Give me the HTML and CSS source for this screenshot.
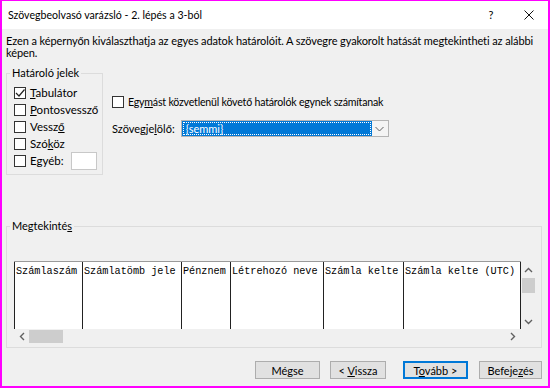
FILE: index.html
```html
<!DOCTYPE html>
<html lang="hu">
<head>
    <meta charset="UTF-8">
    <title>Szövegbeolvasó varázsló</title>
    <link rel="stylesheet" href="styles.css">
</head>
<body>
    <div class="window">
        <div class="titlebar">
            <span class="title">Szövegbeolvasó varázsló - 2. lépés a 3-ból</span>
            <span class="help">?</span>
            <span class="close">
                <svg width="10" height="10" viewBox="0 0 10 10"><path d="M0.5 0.5 L9.5 9.5 M9.5 0.5 L0.5 9.5" stroke="#111" stroke-width="1" fill="none"/></svg>
            </span>
        </div>

        <div class="body">
            <p class="intro">Ezen a képernyőn kiválaszthatja az egyes adatok határolóit. A szövegre gyakorolt hatását megtekintheti az alábbi<br>képen.</p>

            <div class="options">
                <fieldset class="group delims">
                    <legend>Határoló jelek</legend>
                    <div class="check">
                        <span class="box"><svg width="10" height="10" viewBox="0 0 10 10"><path d="M1 5 L4 8 L9.5 1.5" stroke="#222" stroke-width="1.2" fill="none"/></svg></span>
                        <span><u>T</u>abulátor</span>
                    </div>
                    <div class="check">
                        <span class="box"></span>
                        <span><u>P</u>ontosvessző</span>
                    </div>
                    <div class="check">
                        <span class="box"></span>
                        <span>Vessz<u>ő</u></span>
                    </div>
                    <div class="check">
                        <span class="box"></span>
                        <span>Szó<u>k</u>öz</span>
                    </div>
                    <div class="check other">
                        <span class="box"></span>
                        <span>E<u>g</u>yéb:</span>
                        <span class="textbox"></span>
                    </div>
                </fieldset>

                <div class="more">
                    <div class="check">
                        <span class="box"></span>
                        <span class="tight">Egy<u>m</u>ást közvetlenül követő határolók egynek számítanak</span>
                    </div>
                    <div class="qualifier">
                        <span>Szövegje<u>l</u>ölő:</span>
                        <div class="combo">
                            <span class="combo-value"><span class="focus">{semmi}</span></span>
                            <span class="combo-arrow">
                                <svg width="9" height="6" viewBox="0 0 9 6"><path d="M0.5 1 L4.5 5 L8.5 1" stroke="#606060" stroke-width="1" fill="none"/></svg>
                            </span>
                        </div>
                    </div>
                </div>
            </div>

            <fieldset class="group preview">
                <legend>Megtekinté<u>s</u></legend>
                <div class="preview-box">
                    <div class="sheet">
                        <div class="col">Számlaszám</div>
                        <div class="col">Számlatömb jele</div>
                        <div class="col">Pénznem</div>
                        <div class="col">Létrehozó neve</div>
                        <div class="col">Számla kelte</div>
                        <div class="col last">Számla kelte (UTC)</div>
                    </div>
                    <div class="vscroll">
                        <svg width="9" height="6" viewBox="0 0 9 6"><path d="M1 5 L4.5 1.5 L8 5" stroke="#606060" stroke-width="1.4" fill="none"/></svg>
                        <span class="vthumb"></span>
                        <span class="spacer"></span>
                        <svg width="9" height="6" viewBox="0 0 9 6"><path d="M1 1 L4.5 4.5 L8 1" stroke="#606060" stroke-width="1.4" fill="none"/></svg>
                    </div>
                    <div class="hscroll">
                        <svg width="6" height="9" viewBox="0 0 6 9"><path d="M5 1 L1.5 4.5 L5 8" stroke="#606060" stroke-width="1.4" fill="none"/></svg>
                        <span class="hthumb"></span>
                        <span class="spacer"></span>
                        <svg width="6" height="9" viewBox="0 0 6 9"><path d="M1 1 L4.5 4.5 L1 8" stroke="#606060" stroke-width="1.4" fill="none"/></svg>
                    </div>
                    <div class="corner"></div>
                </div>
            </fieldset>

            <div class="buttons">
                <button class="btn">Mégse</button>
                <button class="btn back">&lt; <u>V</u>issza</button>
                <button class="btn primary">T<u>o</u>vább &gt;</button>
                <button class="btn">Befeje<u>z</u>és</button>
            </div>
        </div>
    </div>
</body>
</html>
```

FILE: styles.css
```css
* {
    margin: 0;
    padding: 0;
    box-sizing: border-box;
}

body {
    font-family: 'Lato', 'Noto Sans', sans-serif;
    font-size: 11px;
    line-height: 12px;
    color: #000;
    background: #fff;
}

.window {
    width: 550px;
    height: 388px;
    border: 2px solid #ff00ff;
    border-top-width: 1px;
    background-color: #f0f0f0;
}

.titlebar {
    height: 28px;
    background-color: #fff;
    display: flex;
    align-items: center;
    padding-left: 6px;
}

.title {
    flex: 1;
    font-size: 10.6px;
}

.help {
    width: 12px;
    margin-right: 27px;
    text-align: center;
}

.close {
    display: flex;
    margin-right: 14px;
}

.body {
    padding: 6px 6px 0 4px;
}

.intro {
    height: 24px;
    white-space: nowrap;
    letter-spacing: -0.1px;
}

.options {
    display: flex;
    margin-top: 8px;
}

.group {
    border: 1px solid #dcdcdc;
    min-width: 0;
}

.group legend {
    margin-left: -4px;
    padding: 0 2px;
}

.delims {
    flex: none;
    width: 97px;
    height: 108px;
    padding: 5px 5px 0 7px;
}

.delims .check {
    font-size: 11.5px;
    white-space: nowrap;
}

.check {
    display: flex;
    align-items: center;
    height: 17px;
    gap: 4px;
}

.box {
    flex: none;
    width: 12px;
    height: 12px;
    border: 1px solid #333;
    background-color: #fff;
    display: flex;
    align-items: center;
    justify-content: center;
}

.tight {
    font-size: 10.6px;
    letter-spacing: -0.2px;
}

.other {
    height: 18px;
}

.textbox {
    flex: none;
    width: 26px;
    height: 18px;
    margin-left: auto;
    background-color: #fff;
    border: 1px solid #c8c8c8;
}

.more {
    margin-left: 9px;
    padding-top: 26px;
}

.qualifier {
    display: flex;
    align-items: center;
    margin-top: 10px;
}

.combo {
    display: flex;
    width: 208px;
    height: 17px;
    margin-left: 6px;
    border: 1px solid #b4b4b4;
    background-color: #fff;
}

.combo-value {
    flex: 1;
    background-color: #0078d7;
    color: #fff;
    padding: 1px;
}

.focus {
    display: block;
    height: 13px;
    line-height: 12px;
    padding-left: 2px;
    border: 1px dotted #fff;
}

.combo-arrow {
    width: 16px;
    display: flex;
    align-items: center;
    justify-content: center;
    background-color: #f4f4f4;
}

.preview {
    margin-top: 45px;
    height: 128px;
    padding: 29px 7px 0 7px;
}

.preview-box {
    display: grid;
    grid-template-columns: 507px 14px;
    grid-template-rows: 68px 14px;
}

.sheet {
    display: grid;
    grid-template-columns: 68px 99px 49px 93px 80px 118px;
    background-color: #fff;
    border-top: 1px solid #9a9a9a;
    font-family: 'Liberation Mono', monospace;
    font-size: 10.2px;
}

.col {
    border-left: 1px solid #222;
    padding: 4px 0 0 1px;
    white-space: nowrap;
    overflow: hidden;
}

.col.last {
    border-right: 1px solid #222;
}

.vscroll {
    display: flex;
    flex-direction: column;
    align-items: center;
    padding: 6px 0 4px;
}

.vthumb {
    width: 13px;
    height: 15px;
    margin: 5px 0 0 1px;
    background-color: #cdcdcd;
}

.spacer {
    flex: 1;
}

.hscroll {
    display: flex;
    align-items: center;
    padding: 0 5px 0 5px;
}

.hthumb {
    width: 34px;
    height: 13px;
    margin-left: 4px;
    background-color: #cdcdcd;
}

.buttons {
    display: flex;
    justify-content: flex-end;
    margin-top: 13px;
}

.btn {
    font-family: inherit;
    font-size: 11px;
    width: 65px;
    height: 18px;
    background-color: #e1e1e1;
    border: 1px solid #adadad;
    margin-left: 10px;
}

.btn.back {
    width: 56px;
}

.btn.primary {
    margin-left: 17px;
    border: 2px solid #0078d7;
}

.btn:last-child {
    width: 63px;
    margin-left: 11px;
}
```
